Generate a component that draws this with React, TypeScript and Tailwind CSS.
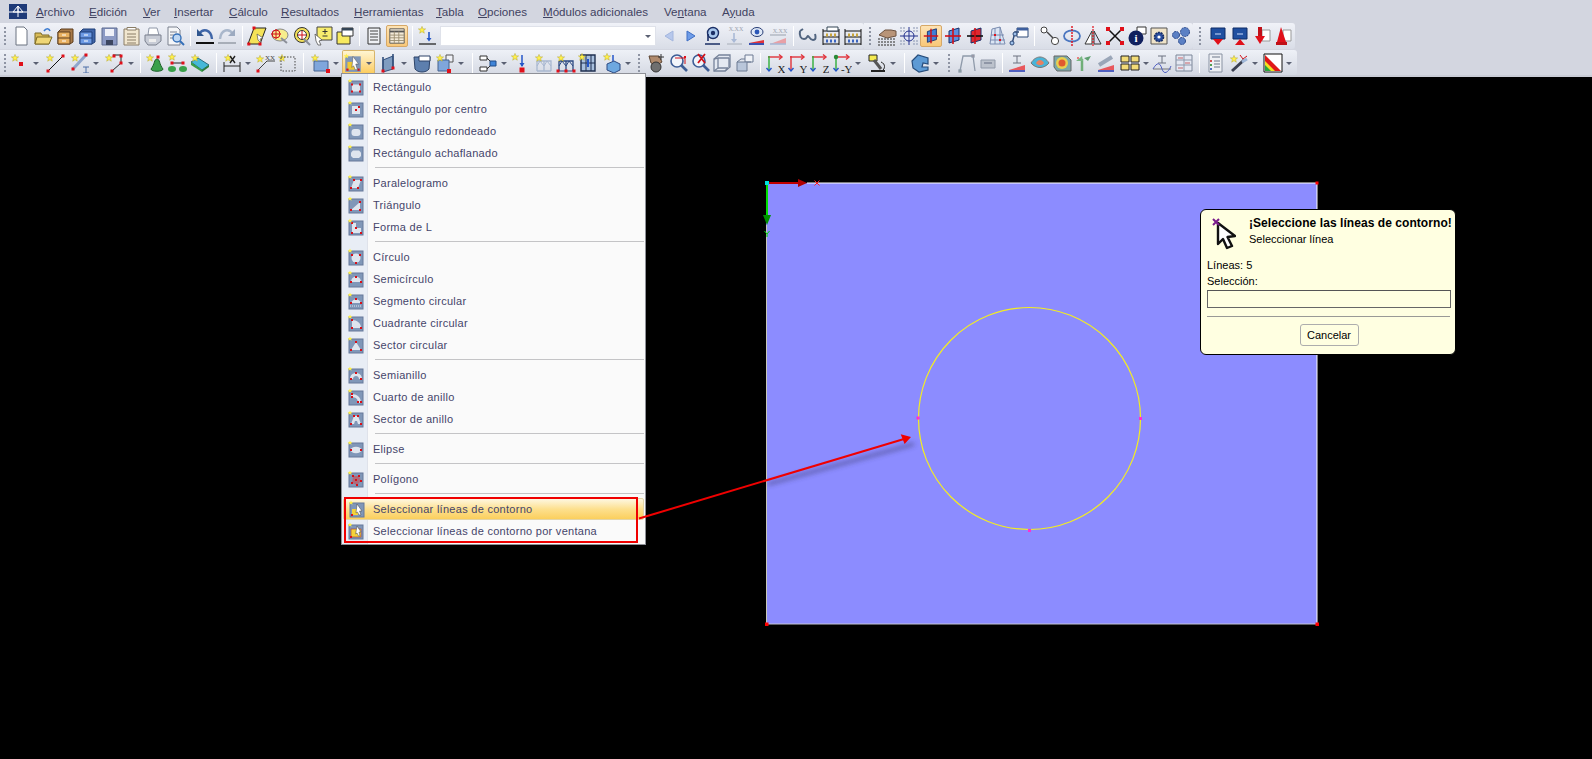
import React from 'react';

const Star = ({ x = 4, y = 4 }: { x?: number; y?: number }) => (
    <polygon
        transform={`translate(${x} ${y})`}
        points="0,-3.6 1,-1.1 3.6,-1.1 1.6,.6 2.3,3.2 0,1.7 -2.3,3.2 -1.6,.6 -3.6,-1.1 -1,-1.1"
        fill="#fff04a"
        stroke="#b5a72c"
        strokeWidth=".5"
    />
);
const Dot = ({ x, y, c = '#e0101a', s = 3 }: { x: number; y: number; c?: string; s?: number }) => (
    <rect x={x - s / 2} y={y - s / 2} width={s} height={s} fill={c} />
);
const Xx = ({ y = 5, c = '#333', s = 6 }: { y?: number; c?: string; s?: number }) => (
    <text x="12" y={y} fontSize={s} textAnchor="middle" fill={c} fontFamily="Liberation Serif, serif">X.XX</text>
);
const Letter = ({ t, c = '#222' }: { t: string; c?: string }) => (
    <text x="20.5" y="19.5" fontSize="11" textAnchor="end" fill={c} stroke="none" fontFamily="Liberation Serif, serif">{t}</text>
);
const Eye = ({ y = 6 }: { y?: number }) => (
    <g>
        <ellipse cx="10" cy={y} rx="6" ry="4.5" fill="#dfe8f6" stroke="#273c75" />
        <circle cx="10" cy={y} r="2.4" fill="#2a56b8" />
    </g>
);
const Base = ({ y = 17 }: { y?: number }) => (
    <g>
        <path d={`M2 ${y}L17 ${y - 3}V${y}Z`} fill="#e0323a" />
        <path d={`M2 ${y}H17V${y + 2}H2Z`} fill="#3850b0" />
    </g>
);
const Cab = ({ a, b, c }: { a: string; b: string; c: string }) => (
    <g>
        <path d="M6 3H18V16L15 18H3V6Z" fill={a} stroke={c} />
        <path d="M3 6H15V18H3Z" fill={b} stroke={c} />
        <path d="M3 12H15" stroke={c} />
        <path d="M7 9H11M7 15H11" stroke="#fff" />
    </g>
);
const Abacus = () => (
    <g>
        <path d="M2 5H18M2 11H18M2 18H18M2 3V19M18 3V19" stroke="#111" fill="none" />
        <path d="M5 9h2M9 9h2M13 9h2" stroke="#c9a53a" strokeWidth="3" />
        <path d="M5 15h2M9 15h2M13 15h2" stroke="#3a64c0" strokeWidth="3" />
    </g>
);
const Plane = ({ c = '#3f7fd8', r = false }: { c?: string; r?: boolean }) => (
    <g>
        <path d="M6 5L16 2V14L6 17Z" fill={c} stroke="#17306b" />
        <path d="M2 10H18" stroke={r ? '#111' : '#d01018'} strokeWidth="1.6" />
        <path d="M10 2V18" stroke="#d01018" strokeWidth="1.6" />
    </g>
);
const Blue = () => <path d="M3 2H17V13H3Z" fill="#1f4fa0" stroke="#0e2c66" />;
const Axis = ({ t, g = '#2fae3a', r = '#e0323a', b = '#2456c8' }: { t: string; g?: string; r?: string; b?: string }) => (
    <g fill="none" strokeWidth="1.4">
        <path d="M3 4H16" stroke={r} />
        <path d="M14 1.5L17 4L14 6.5" stroke={r} />
        <path d="M4 3V18" stroke={g} />
        <path d="M1.5 15L4 18L6.5 15" stroke={b} />
        <Letter t={t} />
    </g>
);

const I: Record<string, React.ReactNode> = {
    // fila 1
    doc: <path d="M5 1H13L16 4V19H5Z" fill="#fff" stroke="#6b7280" />,
    open: (
        <g>
            <path d="M2 7H8L9 9H16V18H2Z" fill="#d9bb58" stroke="#7d6a24" />
            <path d="M4 11H19L16 18H2Z" fill="#efd676" stroke="#7d6a24" />
            <path d="M11 5C13 2 16 2 17 5" stroke="#3a7ad0" fill="none" strokeWidth="1.6" />
        </g>
    ),
    cab: <Cab a="#a87a48" b="#e8b060" c="#5c3c1c" />,
    bluecab: <Cab a="#3f64a8" b="#6d9ae4" c="#1f3e78" />,
    save: (
        <g>
            <path d="M3 2H18V19H3Z" fill="#8c9ac4" stroke="#5d6a90" />
            <path d="M6 3H15V10H6Z" fill="#eef0f8" />
            <path d="M7 14H14V19H7Z" fill="#3c4660" />
        </g>
    ),
    clip: (
        <g>
            <path d="M3 3H18V19H3Z" fill="#f1e6cf" stroke="#8a7d66" />
            <path d="M6 1.5H15V4H6Z" fill="#fff" stroke="#8a7d66" />
            <path d="M6 8H15M6 11H15M6 14H15M6 17H15" stroke="#8a7d66" />
        </g>
    ),
    print: (
        <g>
            <path d="M6 2H14L16 9H5Z" fill="#fff" stroke="#9098a8" />
            <path d="M2 9H18V15L13 19H5L2 15Z" fill="#c8ccd6" stroke="#7a808e" />
            <path d="M6 13H13V16H6Z" fill="#eee" />
        </g>
    ),
    preview: (
        <g>
            <path d="M3 1H12L15 4V19H3Z" fill="#f5f6f8" stroke="#7a808e" />
            <path d="M5 6H12M5 9H9M5 12H8" stroke="#7a808e" />
            <circle cx="12" cy="12" r="4" fill="#bfd8f4" stroke="#3670b8" strokeWidth="1.4" />
            <path d="M15 15L19 19" stroke="#3670b8" strokeWidth="2" />
        </g>
    ),
    undo: (
        <g>
            <path d="M4 8C8 2 16 3 17 13" stroke="#3f66a8" strokeWidth="2.4" fill="none" />
            <path d="M2 3L9 10H2Z" fill="#2f568f" />
            <path d="M1 17H19" stroke="#111" strokeWidth="2" />
        </g>
    ),
    redo: (
        <g>
            <path d="M16 8C12 2 4 3 3 13" stroke="#a9b7cb" strokeWidth="2.4" fill="none" />
            <path d="M18 3L11 10H18Z" fill="#9caac0" />
            <path d="M1 17H19" stroke="#a8aeb8" strokeWidth="2" />
        </g>
    ),
    para: (
        <g>
            <path d="M7 2H19L13 18H1Z" fill="#f4e358" stroke="#222" />
            <path d="M10 8L16 12L13 13L14 17L11 14Z" fill="#fff" stroke="#555" strokeWidth=".7" />
            <Dot x={7} y={2} /><Dot x={1.8} y={18} /><Dot x={13} y={18} />
        </g>
    ),
    spot: (
        <g>
            <ellipse cx="11" cy="9" rx="8" ry="6" fill="#f7ed8c" stroke="#888" />
            <circle cx="7" cy="8" r="4" fill="none" stroke="#d01018" />
            <path d="M2 8H12M7 3V13" stroke="#d01018" />
            <path d="M12 12L18 17" stroke="#8b8f99" strokeWidth="2" />
        </g>
    ),
    ring: (
        <g>
            <circle cx="10" cy="9" r="7.5" fill="#f4e15a" stroke="#333" />
            <circle cx="10" cy="9" r="4.5" fill="#fff" stroke="#333" />
            <path d="M6 9H14M10 5V13" stroke="#d01018" />
            <path d="M12 13L18 19" stroke="#8b8f99" strokeWidth="2" />
        </g>
    ),
    note: (
        <g>
            <path d="M4 1H19V14H4Z" fill="#f7ec6d" stroke="#444" />
            <path d="M12 3V8M9.5 5.5H14.5M9.5 10H14.5" stroke="#333" />
            <path d="M2 8L9 14L6 15L8 19L5 19L3 15Z" fill="#fff" stroke="#555" strokeWidth=".8" />
        </g>
    ),
    win: (
        <g>
            <path d="M2 6H15V18H2Z" fill="#f7ea60" stroke="#333" />
            <path d="M7 2H18V10H7Z" fill="#fff" stroke="#333" />
            <path d="M7 2H18V4.5H7Z" fill="#345" />
        </g>
    ),
    list: (
        <g>
            <path d="M4 2H16V18H4Z" fill="#eef0f4" stroke="#333" />
            <path d="M6 5H14M6 8H14M6 11H14M6 14H14" stroke="#444" />
        </g>
    ),
    table: (
        <g>
            <path d="M2 2H18V18H2Z" fill="#f3ead8" stroke="#555" />
            <path d="M2 5H18" stroke="#555" strokeWidth="2" />
            <path d="M2 9H18M2 12H18M2 15H18M7 5V18M12 5V18" stroke="#9a8d70" />
        </g>
    ),
    down: (
        <g>
            <Star x={5} y={4} />
            <path d="M12 6V14" stroke="#2456c8" strokeWidth="1.6" />
            <path d="M9.5 12L12 15.5L14.5 12Z" fill="#2456c8" />
            <path d="M2 18H19" stroke="#333" strokeWidth="1.4" />
        </g>
    ),
    left: <path d="M14 5V15L6 10Z" fill="#b7c8ec" stroke="#a3b6de" />,
    right: <path d="M6 5V15L14 10Z" fill="#6e9ce8" stroke="#3f6fc4" />,
    eyep: (
        <g>
            <circle cx="11" cy="7" r="5.5" fill="#a9c8ee" stroke="#1b2f66" strokeWidth="1.4" />
            <circle cx="11" cy="7" r="2.2" fill="#1b2f66" />
            <path d="M6 8V15M3 18H18" stroke="#1b2f66" strokeWidth="1.6" />
        </g>
    ),
    xxd: (
        <g>
            <Xx c="#9aa1ad" />
            <path d="M10 7V15" stroke="#a9b9d6" strokeWidth="1.6" />
            <path d="M7 13L10 17L13 13Z" fill="#a9b9d6" />
            <path d="M3 18H18" stroke="#a8aeb8" />
        </g>
    ),
    eyeb: <g><Eye /><Base /></g>,
    xxb: (
        <g>
            <Xx y={7} c="#9aa1ad" />
            <path d="M2 9H18" stroke="#9aa1ad" />
            <path d="M2 18L18 12V18Z" fill="#e8a0a6" />
            <path d="M2 18H18" stroke="#a9b9d6" strokeWidth="1.6" />
        </g>
    ),
    glass: (
        <g fill="none" stroke="#51647f" strokeWidth="2">
            <path d="M2 5C1 10 3 13 6 13C9 13 9 10 10 10C11 10 12 14 15 14C18 14 18 11 17 8" />
            <path d="M2 5L5 3" />
        </g>
    ),
    ab1: (
        <g>
            <Abacus />
            <path d="M6 1H17V5H6Z" fill="#fff" stroke="#345" />
        </g>
    ),
    ab2: <Abacus />,
    hands: (
        <g>
            <path d="M2 9L8 4H14L19 5V10L10 12Z" fill="#b89478" stroke="#6c5240" />
            {[2, 5, 8, 11, 14, 17].map((x) =>
                [13, 16, 19].map((y) => <Dot key={`${x}-${y}`} x={x} y={y} c="#555" s={1.6} />),
            )}
        </g>
    ),
    target: (
        <g>
            {[2, 5, 15, 18].map((x) => [2, 5, 15, 18].map((y) => <Dot key={`${x}-${y}`} x={x} y={y} c="#8894b0" s={1.4} />))}
            <circle cx="10" cy="10" r="5" fill="#e4e8f6" stroke="#23308c" />
            <path d="M1 10H19M10 1V19" stroke="#23308c" />
        </g>
    ),
    plane: <Plane />,
    plane2: <Plane c="#5a8fe0" />,
    plane3: <Plane c="#e02830" r />,
    gridp: (
        <g>
            <path d="M5 3L13 1L18 18H3Z" fill="#dbe5f4" stroke="#7a8cb0" />
            <path d="M4 9H17M4 14H18M8 2V18M13 1V18" stroke="#7a8cb0" />
            <Dot x={8} y={9} s={2} /><Dot x={13} y={14} s={2} />
        </g>
    ),
    winnode: (
        <g>
            <path d="M8 2H19V11H8Z" fill="#fff" stroke="#2e4a78" />
            <path d="M8 2H19V4.5H8Z" fill="#3d5f9e" />
            <path d="M3 18L6 6H10" stroke="#2e4a78" fill="none" strokeWidth="1.4" />
            <circle cx="3" cy="17" r="2" fill="#9ec0ea" stroke="#2e4a78" />
            <circle cx="6" cy="8" r="2" fill="#9ec0ea" stroke="#2e4a78" />
        </g>
    ),
    chain: (
        <g fill="#fff" stroke="#444">
            <circle cx="4" cy="4" r="3" />
            <circle cx="15" cy="15" r="3.6" />
            <path d="M7 6L13 12" fill="none" strokeWidth="1.4" />
        </g>
    ),
    rotate: (
        <g>
            <ellipse cx="10" cy="10" rx="8" ry="5.5" fill="none" stroke="#4b76c0" strokeWidth="1.8" />
            <path d="M10 0V20" stroke="#e0101a" strokeWidth="1.4" strokeDasharray="2 1" />
        </g>
    ),
    mirror: (
        <g>
            <path d="M9 5L2 18H9Z" fill="#fff" stroke="#333" />
            <path d="M11 5L18 18H11Z" fill="#dde" stroke="#333" />
            <path d="M10 0V20" stroke="#e0101a" strokeWidth="1.2" strokeDasharray="2 1" />
        </g>
    ),
    cross: (
        <g>
            <path d="M3 3L17 17M17 3L3 17" stroke="#111" strokeWidth="1.5" />
            <Dot x={3} y={3} s={4} /><Dot x={17} y={3} s={4} /><Dot x={3} y={17} s={4} /><Dot x={17} y={17} s={4} />
        </g>
    ),
    info: (
        <g>
            <path d="M10 1H19V8H10Z" fill="#fff" stroke="#333" />
            <circle cx="9" cy="12" r="7.5" fill="#10205e" />
            <text x="9" y="16" fontSize="11" fontWeight="700" textAnchor="middle" fill="#fff" fontFamily="Liberation Serif, serif">i</text>
        </g>
    ),
    gear: (
        <g>
            <path d="M2 2H18V18H2Z" fill="#efe3c8" stroke="#555" />
            <circle cx="10" cy="11" r="4.5" fill="#2a4ea0" stroke="#172e66" strokeWidth="1.6" strokeDasharray="2 .8" />
            <circle cx="10" cy="11" r="1.6" fill="#fff" />
        </g>
    ),
    gears: (
        <g fill="#5b80c4" stroke="#2c4a8c" strokeDasharray="2 .8">
            <circle cx="14" cy="6" r="4.5" />
            <circle cx="5" cy="9" r="3.5" />
            <circle cx="11" cy="15" r="3.5" />
        </g>
    ),
    bd1: (
        <g>
            <Blue />
            <path d="M7 8H13" stroke="#cfe0ff" />
            <path d="M5 13H15L10 19Z" fill="#e0101a" />
        </g>
    ),
    bd2: (
        <g>
            <Blue />
            <path d="M7 8H13" stroke="#cfe0ff" />
            <path d="M5 19H15L10 13Z" fill="#e0101a" />
        </g>
    ),
    bd3: (
        <g>
            <path d="M10 4H18V15H10Z" fill="#fff" stroke="#999" />
            <path d="M8 1V10" stroke="#c01018" strokeWidth="4" />
            <path d="M3 10H13L8 18Z" fill="#e0101a" />
        </g>
    ),
    bd4: (
        <g>
            <path d="M10 4H18V15H10Z" fill="#fff" stroke="#999" />
            <path d="M8 1L4 16H13Z" fill="#e0101a" />
            <path d="M3 16H14V19H3Z" fill="#c01018" />
        </g>
    ),
    // fila 2
    pt: <g><Star x={5} y={5} /><Dot x={11} y={11} s={4} /></g>,
    line: <g><Star x={5} y={5} /><path d="M3 18L18 3" stroke="#111" /><Dot x={3} y={18} /><Dot x={18} y={3} /></g>,
    dbl: (
        <g>
            <Star x={5} y={5} />
            <path d="M3 16L16 2" stroke="#8fa6cc" strokeWidth="3" />
            <path d="M13 14H19M16 14V20M13 20H19" stroke="#4d6fa8" />
            <Dot x={3} y={16} /><Dot x={16} y={2} />
        </g>
    ),
    poly: (
        <g>
            <Star x={4} y={5} />
            <path d="M8 2H16V10L7 18" stroke="#222" fill="none" />
            <Dot x={9} y={3} /><Dot x={16} y={3} /><Dot x={16} y={10} /><Dot x={7} y={18} />
        </g>
    ),
    node: (
        <g>
            <Star x={5} y={5} />
            <path d="M12 6C9 6 10 11 6 16C6 19 18 19 18 16C14 11 15 6 12 6Z" fill="#3aa04a" stroke="#1d5f2a" />
            <Dot x={13} y={4} s={3} />
        </g>
    ),
    node2: (
        <g>
            <Star x={5} y={4} />
            <path d="M6 10H15" stroke="#222" />
            <Dot x={5} y={10} /><Dot x={16} y={10} />
            <ellipse cx="5" cy="16" rx="4" ry="3" fill="#3aa04a" />
            <ellipse cx="16" cy="16" rx="4" ry="3" fill="#3aa04a" />
        </g>
    ),
    slab: (
        <g>
            <path d="M1 9L8 5L19 12L12 17Z" fill="#46b8d8" stroke="#2a6d7e" />
            <path d="M1 9V12L12 19V17Z" fill="#3aa04a" />
            <path d="M19 12V14L12 19V17Z" fill="#2b7f38" />
            <Star x={5} y={5} />
        </g>
    ),
    dim: (
        <g>
            <Star x={6} y={5} />
            <path d="M2 9V19M18 9V19M2 13H18" stroke="#222" />
            <path d="M8 3L13 10M13 3L8 10" stroke="#222" strokeWidth="1.4" />
        </g>
    ),
    xxl: (
        <g>
            <Star x={5} y={6} />
            <text x="20" y="7" fontSize="7" textAnchor="end" fill="#444" fontFamily="Liberation Serif, serif">XX</text>
            <path d="M2 18L12 8H20" stroke="#444" fill="none" />
            <Dot x={3} y={18} />
        </g>
    ),
    dash: (
        <g>
            <Star x={5} y={5} />
            <path d="M4 4H18V18H4Z" fill="none" stroke="#444" strokeDasharray="1.5 1.5" />
        </g>
    ),
    box: (
        <g>
            <path d="M4 8H18V18H4Z" fill="#7fa6dc" stroke="#47638e" />
            <Star x={5} y={5} />
            <Dot x={18} y={18} s={4} />
        </g>
    ),
    surf: (
        <g>
            <path d="M5 7L15 3V16L5 19Z" fill="#7f9cc0" stroke="#34507c" />
            <path d="M5 4V19M15 1V15" stroke="#34507c" strokeWidth="1.6" />
            <Dot x={5} y={18} /><Dot x={15} y={15} />
        </g>
    ),
    solid: (
        <g>
            <path d="M2 4H18L17 16C14 20 6 20 3 16Z" fill="#5d7fae" stroke="#2d4368" />
            <path d="M7 3H18V8H7Z" fill="#fff" stroke="#2d4368" />
        </g>
    ),
    solids: (
        <g>
            <path d="M11 2H18V9H11Z" fill="#eef0f6" stroke="#555" />
            <path d="M3 7H14V18H3Z" fill="#7fa6dc" stroke="#47638e" />
            <Star x={5} y={5} />
            <Dot x={14} y={18} s={4} />
        </g>
    ),
    flow: (
        <g>
            <path d="M2 3H9V7H2ZM2 14H9V18H2Z" fill="#fff" stroke="#333" />
            <path d="M9 5L13 9M9 16L13 12" stroke="#333" />
            <path d="M12 8H18V13H12Z" fill="#3f84d8" stroke="#204c88" />
        </g>
    ),
    load: (
        <g>
            <Star x={5} y={4} />
            <path d="M12 2V13" stroke="#2456c8" strokeWidth="1.5" />
            <path d="M9.5 10L12 14L14.5 10Z" fill="#2456c8" />
            <Dot x={12} y={17} s={5} />
        </g>
    ),
    fr1: (
        <g stroke="#a9b8d0" fill="none">
            <path d="M3 8H17V18M3 8V18M10 8V18M3 18H17" strokeWidth="1.3" />
            <path d="M3 13L6 8L10 13L13 8L17 13" />
            <Star x={5} y={5} />
        </g>
    ),
    fr2: (
        <g fill="none">
            <path d="M3 8H17V18M3 8V18M10 8V18" stroke="#2d4a82" strokeWidth="1.3" />
            <path d="M3 13L6 8L10 13L13 8L17 13" stroke="#2d4a82" />
            <path d="M1 18H19" stroke="#2d4a82" />
            <Star x={5} y={5} />
            <Dot x={2} y={18} /><Dot x={10} y={18} /><Dot x={18} y={18} />
        </g>
    ),
    fr3: (
        <g>
            <path d="M3 2H17V18H3Z" fill="#a9c0de" stroke="#1f2f50" strokeWidth="1.4" />
            <path d="M8 2V18M13 2V18M3 10H17" stroke="#1f2f50" />
            <path d="M10 6V14" stroke="#2456c8" strokeWidth="2" />
            <Star x={4} y={4} />
        </g>
    ),
    cube: (
        <g>
            <Star x={5} y={4} />
            <path d="M11 2V8" stroke="#2456c8" strokeWidth="1.5" />
            <path d="M5 11L12 8L18 11V17L12 20L5 17Z" fill="#6ea8e0" stroke="#2d4a82" />
        </g>
    ),
    // cuadro derecho
    hand: (
        <g>
            <path d="M4 3L14 3L17 9L12 12L6 10Z" fill="#b08a6c" stroke="#5d4634" />
            <circle cx="11" cy="14" r="5" fill="#6f6f6f" stroke="#333" />
            <path d="M16 1V7M13 4H19" stroke="#333" />
        </g>
    ),
    zoomp: (
        <g>
            <circle cx="8" cy="8" r="6" fill="#f2f5fb" stroke="#3d5d96" strokeWidth="1.6" />
            <path d="M12 12L18 18" stroke="#3d5d96" strokeWidth="2.6" />
            <path d="M6 5H16V11" stroke="#d01018" fill="none" />
            <Dot x={16} y={4} s={2} />
        </g>
    ),
    zoomx: (
        <g>
            <circle cx="8" cy="8" r="6" fill="#f2f5fb" stroke="#3d5d96" strokeWidth="1.6" />
            <path d="M12 12L18 18" stroke="#3d5d96" strokeWidth="2.6" />
            <path d="M7 1L14 10M14 1L7 10" stroke="#d01018" strokeWidth="1.8" />
        </g>
    ),
    wire: (
        <g fill="none" stroke="#76839a" strokeWidth="1.3">
            <path d="M2 6L7 2H18V14L13 18H2Z" fill="#e4e9f2" />
            <path d="M6 5H17M6 5V15M6 15H16M17 5V14M2 6L6 5M2 18L6 15M13 18L16 15" />
        </g>
    ),
    blocks: (
        <g stroke="#6d7b93">
            <path d="M10 2H18V9H10Z" fill="#f0f3f8" />
            <path d="M2 9H12V18H2Z" fill="#b9c6da" />
            <path d="M2 9L6 6H10M12 9L16 9" fill="none" />
        </g>
    ),
    ax: <Axis t="X" g="#2fae3a" />,
    ay: <Axis t="Y" g="#e0323a" />,
    az: <Axis t="Z" g="#2fae3a" />,
    ay2: (
        <g>
            <Axis t="-Y" g="#2fae3a" />
            <circle cx="4" cy="4" r="2.2" fill="#2a8a36" />
        </g>
    ),
    micro: (
        <g>
            <path d="M2 2H10V8H2Z" fill="#f4ea50" stroke="#222" />
            <path d="M7 7L14 16" stroke="#555" strokeWidth="3" />
            <path d="M4 18H18" stroke="#222" strokeWidth="2" />
            <path d="M14 9C19 11 18 16 15 18" stroke="#222" fill="none" />
        </g>
    ),
    shape: <path d="M2 8L8 2L18 5V11L13 10L12 14L18 14V17L9 19L3 15Z" fill="#5d9ad4" stroke="#264d7c" strokeWidth="1.2" />,
    // deshabilitados
    pf: (
        <g fill="none" stroke="#8f9aaa" strokeWidth="1.3">
            <path d="M3 18L6 3H16L18 18" />
            <Dot x={16} y={3} c="#e08a8a" s={2} />
            <Dot x={3} y={18} c="#7ab884" s={2} />
        </g>
    ),
    pill: (
        <g>
            <path d="M3 7H17V15H3Z" fill="#bcc2cc" stroke="#9099a8" />
            <path d="M6 10H14" stroke="#8f96a6" strokeWidth="2" />
        </g>
    ),
    ib: (
        <g>
            <path d="M6 3H14M10 3V10M6 10H14" stroke="#6d7280" />
            <path d="M2 17L18 12V17Z" fill="#e8575c" />
            <path d="M2 17H18V19H2Z" fill="#5060c0" />
        </g>
    ),
    leaf: (
        <g>
            <path d="M1 10C6 2 14 2 19 10C14 16 6 16 1 10Z" fill="#49b4d8" stroke="#777" />
            <path d="M6 10C8 6 12 6 14 10C12 13 8 13 6 10Z" fill="#e88060" />
        </g>
    ),
    heat: (
        <g>
            <path d="M2 3H15L19 7V18H5L2 14Z" fill="#7aa8a8" stroke="#666" />
            <circle cx="10" cy="10" r="6" fill="#e8d050" />
            <circle cx="10" cy="10" r="3.5" fill="#e05a30" />
        </g>
    ),
    tree: (
        <g>
            <path d="M9 6V18" stroke="#6fae78" strokeWidth="2.5" />
            <path d="M3 8L9 3L10 8Z" fill="#7ab884" />
            <path d="M11 5L18 3L15 8Z" fill="#5fa070" />
            <Dot x={5} y={5} c="#e88080" s={2} />
        </g>
    ),
    skew: (
        <g>
            <path d="M2 17L18 12V17Z" fill="#e8575c" />
            <path d="M2 17H18V19H2Z" fill="#5060c0" />
            <path d="M3 12L16 4" stroke="#9aa6b8" strokeWidth="4" />
        </g>
    ),
    four: (
        <g fill="#f3dc78" stroke="#222">
            <path d="M1 3H9V9H1ZM11 3H19V9H11ZM1 11H9V17H1ZM11 11H19V17H11Z" />
        </g>
    ),
    wave: (
        <g fill="none">
            <path d="M6 3H14M10 3V10M6 10H14" stroke="#6d7280" />
            <path d="M1 16H19" stroke="#777" />
            <path d="M1 16C5 9 8 9 10 16C12 22 16 20 19 13" stroke="#5060c0" />
        </g>
    ),
    rows: (
        <g>
            <path d="M2 2H18V18H2Z" fill="#e4e8f2" stroke="#7d8799" />
            <path d="M2 7H18M2 12H18M10 2V18" stroke="#8e98ab" />
            <path d="M4 5H9M11 10H16M4 15H9" stroke="#c86468" />
        </g>
    ),
    report: (
        <g>
            <path d="M4 1H17V19H4Z" fill="#eef0f4" stroke="#8992a2" />
            <path d="M7 4H15M9 8H15M9 11H15M9 14H15" stroke="#6d7689" />
            <path d="M6 7V9" stroke="#d05050" strokeWidth="2" />
            <path d="M6 11V13" stroke="#50a050" strokeWidth="2" />
            <path d="M6 15V17" stroke="#5070c0" strokeWidth="2" />
        </g>
    ),
    pen: (
        <g>
            <Star x={5} y={6} />
            <path d="M3 18L15 7" stroke="#3a3f50" strokeWidth="3" />
            <path d="M11 2L14 6L18 3" stroke="#d01018" fill="none" />
            <path d="M13 9L18 6" stroke="#9fb7d8" strokeWidth="3" />
        </g>
    ),
    rainbow: (
        <g>
            <path d="M1 1H19V19H1Z" fill="#fff" stroke="#111" />
            <path d="M2 2L18 18H2Z" fill="#e01818" />
            <path d="M2 8L12 18H2Z" fill="#f4e020" />
            <path d="M2 12L8 18H2Z" fill="#2aa83a" />
        </g>
    ),
};

const Drop = () => <span className="w-0 h-0 border-x-[3px] border-x-transparent border-t-[3px] border-t-[#5a6072] ml-[3px] mt-[1px]" />;

const Btn = ({ n, w = 'w-[22px]', drop = false }: { n: string; w?: string; drop?: boolean }) => (
    <div className={`${w} h-[22px] flex items-center shrink-0`}>
        <svg viewBox="0 0 20 20" className="w-[20px] h-[20px] ml-[1px] shrink-0">{I[n]}</svg>
        {drop && <Drop />}
    </div>
);

const Active = ({ n, w = 'w-[22px]' }: { n: string; w?: string }) => (
    <div className={`${w} h-[22px] flex items-center justify-center shrink-0 rounded-[2px] border border-[#d6a868] bg-linear-to-b from-[#fde3b4] to-[#f9c878]`}>
        <svg viewBox="0 0 20 20" className="w-[18px] h-[18px] shrink-0">{I[n]}</svg>
    </div>
);

const Sep = ({ w = 'w-[8px]' }: { w?: string }) => (
    <div className={`${w} h-[20px] flex justify-center shrink-0`}>
        <div className="w-px h-full bg-[#a9afbd] border-r border-white" />
    </div>
);

const Grip = ({ w = 'w-[10px]' }: { w?: string }) => (
    <div className={`${w} h-[18px] flex flex-col justify-between items-center shrink-0`}>
        {[0, 1, 2, 3, 4].map((i) => (
            <span key={i} className="w-[2px] h-[2px] bg-[#8e94a3]" />
        ))}
    </div>
);

const MENU = [
    ['Archivo', 'A', 'rchivo', '', 'w-[53px]'],
    ['Edición', 'E', 'dición', '', 'w-[54px]'],
    ['Ver', 'V', 'er', '', 'w-[31px]'],
    ['Insertar', 'I', 'nsertar', '', 'w-[55px]'],
    ['Cálculo', 'C', 'álculo', '', 'w-[52px]'],
    ['Resultados', 'R', 'esultados', '', 'w-[73px]'],
    ['Herramientas', 'H', 'erramientas', '', 'w-[82px]'],
    ['Tabla', 'T', 'abla', '', 'w-[42px]'],
    ['Opciones', 'O', 'pciones', '', 'w-[65px]'],
    ['Módulos', 'M', 'ódulos adicionales', '', 'w-[121px]'],
    ['Ventana', 'Ve', 'ntana', 'n', 'w-[58px]'],
    ['Ayuda', 'A', 'uda', 'y', 'w-[40px]'],
];

const MI = ({ children }: { children: React.ReactNode }) => (
    <svg viewBox="0 0 18 18" className="w-[18px] h-[18px] shrink-0">
        <rect x="2" y="3" width="14" height="14" fill="#8097b8" stroke="#66799a" />
        {children}
        <polygon points="3,0.5 3.7,2 5.4,2 4.1,3.1 4.6,4.8 3,3.8 1.4,4.8 1.9,3.1 .6,2 2.3,2" fill="#fff04a" />
    </svg>
);
const R = ({ x, y }: { x: number; y: number }) => <rect x={x - 1} y={y - 1} width="2" height="2" fill="#d81018" />;
const F = '#dfe5ee';

const ITEMS: Record<string, React.ReactNode> = {
    rect: <g><rect x="5" y="6.5" width="8" height="7" fill={F} /><R x={5} y={6.5} /><R x={13} y={6.5} /><R x={5} y={13.5} /><R x={13} y={13.5} /></g>,
    center: <g><rect x="5" y="6" width="8" height="8" fill={F} /><R x={9} y={10} /><R x={12} y={7} /></g>,
    round: <rect x="4.5" y="7" width="9" height="7" rx="3" fill={F} />,
    cham: <path d="M6 6.5H12L14 8.5V12L12 14H6L4 12V8.5Z" fill={F} />,
    para: <g><path d="M7 6H14L11 14H4Z" fill={F} /><R x={7} y={6} /><R x={14} y={6} /><R x={4} y={14} /><R x={11} y={14} /></g>,
    tri: <g><path d="M4 14H13V6Z" fill={F} /><R x={4} y={14} /><R x={13} y={14} /><R x={13} y={6} /></g>,
    l: <g><path d="M5 5H9V10H14V15H5Z" fill={F} /><R x={5} y={5} /><R x={9} y={10} /><R x={14} y={15} /><R x={5} y={15} /></g>,
    circ: <g><circle cx="9" cy="10" r="4.5" fill={F} /><R x={5} y={7} /><R x={13} y={7} /><R x={9} y={15} /></g>,
    semi: <g><path d="M4 12C4 5 14 5 14 12Z" fill={F} /><R x={4} y={12} /><R x={14} y={12} /><R x={9} y={7} /></g>,
    seg: <g><path d="M4 11C6 6 12 6 14 11Z" fill={F} /><path d="M3 14H15" stroke={F} strokeDasharray="1 1" /><R x={4} y={11} /><R x={14} y={11} /><R x={9} y={7} /></g>,
    quad: <g><path d="M5 6V14H14C14 9 10 6 5 6Z" fill={F} /><R x={5} y={6} /><R x={5} y={14} /><R x={14} y={14} /></g>,
    sector: <g><path d="M9 6L14 14H4Z" fill={F} /><R x={9} y={6} /><R x={4} y={14} /><R x={14} y={14} /></g>,
    sring: <g><path d="M3 13C3 5 15 5 15 13H12C12 9 6 9 6 13Z" fill={F} /><R x={4} y={13} /><R x={14} y={13} /><R x={9} y={7} /></g>,
    qring: <g><path d="M4 6V9C9 9 11 11 11 15H14C14 9 10 6 4 6Z" fill={F} /><R x={5} y={6} /><R x={5} y={9} /><R x={14} y={14} /><R x={11} y={14} /></g>,
    sectr: <g><path d="M7 6H11L14 14H11L10 11H8L7 14H4Z" fill={F} /><R x={7} y={6} /><R x={11} y={6} /><R x={4} y={14} /><R x={14} y={14} /></g>,
    elli: <g><ellipse cx="9" cy="10" rx="5.5" ry="3.2" fill={F} /><R x={4} y={10} /><R x={14} y={10} /></g>,
    polyg: <g><path d="M6 6H12L14 11L10 15L5 13Z" fill="#b06a7a" /><R x={6} y={6} /><R x={12} y={6} /><R x={14} y={11} /><R x={10} y={15} /><R x={5} y={13} /><R x={9} y={10} /></g>,
    sel: <g><rect x="4" y="9" width="6" height="6" fill="#f4d23a" /><R x={4} y={15} /><path d="M9 4L14 11L11.5 11L13 15L11 15L9.5 12L8 13Z" fill="#fff" stroke="#444" strokeWidth=".5" /></g>,
    selw: <g><rect x="4" y="7" width="10" height="8" fill="#f4d23a" stroke="#a33" strokeWidth=".6" /><path d="M10 4L14 10L12 10L13 14L11.5 14L10 11L8.6 12Z" fill="#fff" stroke="#444" strokeWidth=".5" /><R x={4} y={15} /></g>,
};

const Item = ({ icon, label, hl = false }: { icon: string; label: string; hl?: boolean }) => (
    <div className={`h-[22px] flex items-center shrink-0 ${hl ? 'bg-linear-to-b from-[#fef7e0] via-[#fde08e] to-[#fbcf5c] rounded-[2px] border border-[#e3d5a8]' : ''}`}>
        <div className={`${hl ? 'w-[25px]' : 'w-[26px]'} flex justify-center shrink-0`}><MI>{ITEMS[icon]}</MI></div>
        <span className="ml-[4px] text-[11px] tracking-[0.28px] text-[#45456a]">{label}</span>
    </div>
);

const MenuSep = () => (
    <div className="h-[8px] pt-[3px] pl-[32px] shrink-0">
        <div className="h-px w-full bg-[#c4c4c6]" />
    </div>
);

export default function App() {
    return (
        <div className="relative w-[1592px] h-[759px] overflow-hidden flex flex-col bg-black font-['Liberation_Sans',sans-serif]">
            <header className="shrink-0 bg-[#d3d6e0]">
                <div className="h-[23px] flex items-center pl-[9px]">
                    <svg viewBox="0 0 18 15" className="w-[18px] h-[15px] shrink-0 mr-[9px]">
                        <rect width="18" height="15" fill="#1e3a78" />
                        <path d="M0 8H18" stroke="#fff" />
                        <path d="M9 2L4 8H9ZM9 2V13M9 8L14 8L9 2" stroke="#fff" fill="none" />
                    </svg>
                    {MENU.map(([k, a, b, u, w]) => (
                        <span key={k} className={`${w} text-[11.6px] text-[#3f4260] whitespace-nowrap shrink-0`}>
                            {u ? (
                                k === 'Ayuda' ? (
                                    <>A<u>y</u>uda</>
                                ) : (
                                    <>Ve<u>n</u>tana</>
                                )
                            ) : (
                                <><u>{a}</u>{b}</>
                            )}
                        </span>
                    ))}
                </div>
                <div className="h-[26px] flex items-center">
                    <div className="w-[864px] h-full flex items-center bg-linear-to-b from-[#f0f2f8] to-[#d9dde7] rounded-r-[3px]">
                        <Grip />
                        {['doc', 'open', 'cab', 'bluecab', 'save', 'clip', 'print', 'preview'].map((n) => <Btn key={n} n={n} />)}
                        <Sep />
                        <Btn n="undo" /><Btn n="redo" />
                        <Sep />
                        <Btn n="para" /><Btn n="spot" w="w-[23px]" /><Btn n="ring" w="w-[21px]" /><Btn n="note" /><Btn n="win" />
                        <Sep w="w-[7px]" />
                        <Btn n="list" w="w-[23px]" /><Active n="table" />
                        <Sep />
                        <Btn n="down" />
                        <div className="ml-[2px] w-[216px] h-[20px] bg-white border border-[#dfe2ea] flex items-center justify-end pr-[4px] shrink-0"><Drop /></div>
                        <div className="w-[2px] shrink-0" />
                        <Btn n="left" /><Btn n="right" w="w-[21px]" /><Btn n="eyep" /><Btn n="xxd" w="w-[23px]" /><Btn n="eyeb" w="w-[21px]" /><Btn n="xxb" />
                        <Sep />
                        <Btn n="glass" w="w-[23px]" /><Btn n="ab1" /><Btn n="ab2" />
                    </div>
                    <div className="w-[329px] h-full flex items-center bg-linear-to-b from-[#f0f2f8] to-[#d9dde7] rounded-r-[3px]">
                        <Grip w="w-[12px]" />
                        <Btn n="hands" /><Btn n="target" /><Active n="plane" /><Btn n="plane2" /><Btn n="plane3" /><Btn n="gridp" /><Btn n="winnode" />
                        <Sep w="w-[9px]" />
                        <Btn n="chain" /><Btn n="rotate" w="w-[21px]" /><Btn n="mirror" /><Btn n="cross" /><Btn n="info" /><Btn n="gear" /><Btn n="gears" />
                    </div>
                    <div className="w-[102px] h-full flex items-center bg-linear-to-b from-[#f0f2f8] to-[#d9dde7] rounded-r-[3px]">
                        <Grip w="w-[14px]" />
                        <Btn n="bd1" /><Btn n="bd2" /><Btn n="bd3" w="w-[21px]" /><Btn n="bd4" />
                    </div>
                </div>
                <div className="mt-px h-[25px] flex items-center w-[1297px] bg-linear-to-b from-[#eef1f7] to-[#d5d9e3] rounded-r-[3px]">
                    <Grip w="w-[9px]" />
                    <Btn n="pt" w="w-[35px]" drop /><Btn n="line" w="w-[25px]" /><Btn n="dbl" w="w-[35px]" drop /><Btn n="poly" w="w-[33px]" drop />
                    <Sep w="w-[7px]" />
                    <Btn n="node" /><Btn n="node2" w="w-[23px]" /><Btn n="slab" />
                    <Sep w="w-[10px]" />
                    <Btn n="dim" w="w-[33px]" drop /><Btn n="xxl" /><Btn n="dash" />
                    <Sep w="w-[11px]" />
                    <Btn n="box" w="w-[33px]" drop />
                    <div className="w-[35px] h-[25px] shrink-0">
                        <div className="w-[33px] h-[25px] flex items-center rounded-t-[2px] border border-b-0 border-[#d7b56a] bg-linear-to-b from-[#fff5d2] to-[#fcc94f]">
                            <svg viewBox="0 0 18 18" className="w-[20px] h-[20px] shrink-0">
                                <rect x="2" y="3" width="14" height="14" fill="#7f96b8" />
                                <rect x="4" y="8" width="7" height="7" fill="#f0c832" />
                                <R x={4} y={15} />
                                <R x={14} y={15} />
                                <path d="M9 3L14 10L11.5 10L13 15L11 15L9.5 11.5L8 13Z" fill="#fff" stroke="#555" strokeWidth=".5" />
                                <polygon points="3,0.5 3.7,2 5.4,2 4.1,3.1 4.6,4.8 3,3.8 1.4,4.8 1.9,3.1 .6,2 2.3,2" fill="#fff04a" />
                            </svg>
                            <Drop />
                        </div>
                    </div>
                    <Btn n="surf" w="w-[34px]" drop /><Btn n="solid" w="w-[23px]" /><Btn n="solids" w="w-[33px]" drop />
                    <Sep w="w-[10px]" />
                    <Btn n="flow" w="w-[32px]" drop /><Btn n="load" w="w-[24px]" /><Btn n="fr1" /><Btn n="fr2" /><Btn n="fr3" w="w-[24px]" /><Btn n="cube" w="w-[33px]" drop />
                    <Grip />
                    <Btn n="hand" w="w-[24px]" /><Btn n="zoomp" /><Btn n="zoomx" w="w-[21px]" /><Btn n="wire" w="w-[23px]" /><Btn n="blocks" />
                    <Sep />
                    <Btn n="ax" /><Btn n="ay" /><Btn n="az" w="w-[23px]" /><Btn n="ay2" w="w-[35px]" drop /><Btn n="micro" w="w-[33px]" drop />
                    <Sep w="w-[10px]" />
                    <Btn n="shape" w="w-[33px]" drop />
                    <Grip w="w-[14px]" />
                    <Btn n="pf" w="w-[21px]" /><Btn n="pill" />
                    <Sep w="w-[7px]" />
                    <Btn n="ib" w="w-[23px]" /><Btn n="leaf" /><Btn n="heat" w="w-[21px]" /><Btn n="tree" w="w-[23px]" /><Btn n="skew" w="w-[24px]" /><Btn n="four" w="w-[32px]" drop /><Btn n="wave" /><Btn n="rows" />
                    <Sep w="w-[9px]" />
                    <Btn n="report" w="w-[24px]" /><Btn n="pen" w="w-[34px]" drop /><Btn n="rainbow" w="w-[33px]" drop />
                </div>
                <div className="h-[2px] bg-[#c9ccd6]" />
            </header>

            <main className="relative flex-1">
                {/* modelo: coordenadas de pagina */}
                <svg viewBox="0 77 1592 682" className="absolute inset-0 w-full h-full">
                    <rect x="766" y="183" width="551" height="441" fill="#8c8cff" />
                    <path d="M807 183H1317V624" stroke="#fff" fill="none" />
                    <path d="M1317 624H766" stroke="#c4c4d4" />
                    <path d="M766.5 225V624" stroke="#c8c8b8" />
                    <circle cx="1029.5" cy="418.5" r="111" fill="none" stroke="#f4ee20" strokeWidth="1.2" />
                    <rect x="916.5" y="416.5" width="3" height="3" fill="#ff30d0" />
                    <rect x="1139" y="417" width="3" height="3" fill="#ff30d0" />
                    <rect x="1028" y="529" width="3" height="3" fill="#ff30d0" />
                    <path d="M767 183H800" stroke="#c00000" strokeWidth="2" />
                    <polygon points="798,179 807,183 798,187" fill="#b00000" />
                    <path d="M814.5 180.5L819.5 185.5M819.5 180.5L814.5 185.5" stroke="#ff2020" />
                    <path d="M767 183V218" stroke="#00e000" strokeWidth="2" />
                    <polygon points="763,215 771,215 767,225" fill="#009000" />
                    <path d="M764.5 231L767 234L769.5 231M767 234V237" stroke="#00d000" fill="none" />
                    <rect x="765" y="181" width="4" height="4" fill="#00e0e0" />
                    <rect x="1315.5" y="181.5" width="3" height="3" fill="#ff0000" />
                    <rect x="1315.5" y="622.5" width="3.5" height="3.5" fill="#ff0000" />
                    <rect x="765" y="622.5" width="3.5" height="3.5" fill="#ff0000" />
                </svg>

                {/* cuadro de seleccion */}
                <div className="absolute left-[1200px] top-[132px] w-[256px] h-[146px] flex flex-col bg-[#ffffe1] border border-black rounded-[6px] pl-[6px] pr-[4px] text-black">
                    <div className="flex h-[42px] shrink-0">
                        <svg viewBox="0 0 24 32" className="w-[24px] h-[32px] ml-[5px] mt-[8px] shrink-0">
                            <path d="M6 5L6 26L11 21L15 30L20 28L15.5 19L23 18Z" fill="#fff" stroke="#111" strokeWidth="2.4" strokeLinejoin="round" />
                            <path d="M1 1L7 7M7 1L1 7" stroke="#7a1c8c" strokeWidth="2" />
                        </svg>
                        <div className="ml-[13px] flex flex-col pt-[5px]">
                            <span className="text-[12px] tracking-[0.06px] leading-[17px] font-bold whitespace-nowrap">¡Seleccione las líneas de contorno!</span>
                            <span className="text-[11px] leading-[15px] whitespace-nowrap">Seleccionar línea</span>
                        </div>
                    </div>
                    <span className="mt-[5px] text-[11px] leading-[16px]">Líneas: 5</span>
                    <span className="text-[11px] leading-[16px]">Selección:</span>
                    <div className="h-[18px] w-[244px] mt-px border border-[#666] border-t-[#555] shrink-0" />
                    <div className="h-px w-[243px] mt-[8px] bg-[#9a9a96] shrink-0" />
                    <div className="w-[244px] flex justify-center mt-[7px]">
                        <button className="w-[59px] h-[22px] border border-[#adadad] rounded-[3px] text-[11px] leading-none text-black">Cancelar</button>
                    </div>
                </div>
            </main>

            {/* menu desplegable */}
            <div className="absolute left-[341px] top-[73px] w-[305px] h-[472px] flex flex-col bg-[#fafafa] border border-[#8e9097] pt-[2px] pl-px pr-px">
                <div className="absolute left-0 top-0 bottom-0 w-[26px] bg-[#e8edf5] border-r border-[#dfe2ea]" />
                <div className="relative flex flex-col">
                    <Item icon="rect" label="Rectángulo" />
                    <Item icon="center" label="Rectángulo por centro" />
                    <Item icon="round" label="Rectángulo redondeado" />
                    <Item icon="cham" label="Rectángulo achaflanado" />
                    <MenuSep />
                    <Item icon="para" label="Paralelogramo" />
                    <Item icon="tri" label="Triángulo" />
                    <Item icon="l" label="Forma de L" />
                    <MenuSep />
                    <Item icon="circ" label="Círculo" />
                    <Item icon="semi" label="Semicírculo" />
                    <Item icon="seg" label="Segmento circular" />
                    <Item icon="quad" label="Cuadrante circular" />
                    <Item icon="sector" label="Sector circular" />
                    <MenuSep />
                    <Item icon="sring" label="Semianillo" />
                    <Item icon="qring" label="Cuarto de anillo" />
                    <Item icon="sectr" label="Sector de anillo" />
                    <MenuSep />
                    <Item icon="elli" label="Elipse" />
                    <MenuSep />
                    <Item icon="polyg" label="Polígono" />
                    <MenuSep />
                    <Item icon="sel" label="Seleccionar líneas de contorno" hl />
                    <Item icon="selw" label="Seleccionar líneas de contorno por ventana" />
                </div>
            </div>

            {/* anotacion roja */}
            <div className="absolute left-[344px] top-[497px] w-[294px] h-[46px] border-2 border-[#f00000]" />
            <svg viewBox="0 0 1592 759" className="absolute inset-0 w-full h-full pointer-events-none">
                <defs>
                    <filter id="sombra" x="-10%" y="-50%" width="120%" height="200%">
                        <feGaussianBlur stdDeviation="2.5" />
                    </filter>
                </defs>
                <path d="M768 484L914 444" stroke="#30305a" strokeWidth="3" opacity=".55" filter="url(#sombra)" />
                <path d="M639 518.5L904 439" stroke="#f00000" strokeWidth="2" />
                <polygon points="900.7,434.3 911,437 904.6,444" fill="#f00000" />
            </svg>
        </div>
    );
}
